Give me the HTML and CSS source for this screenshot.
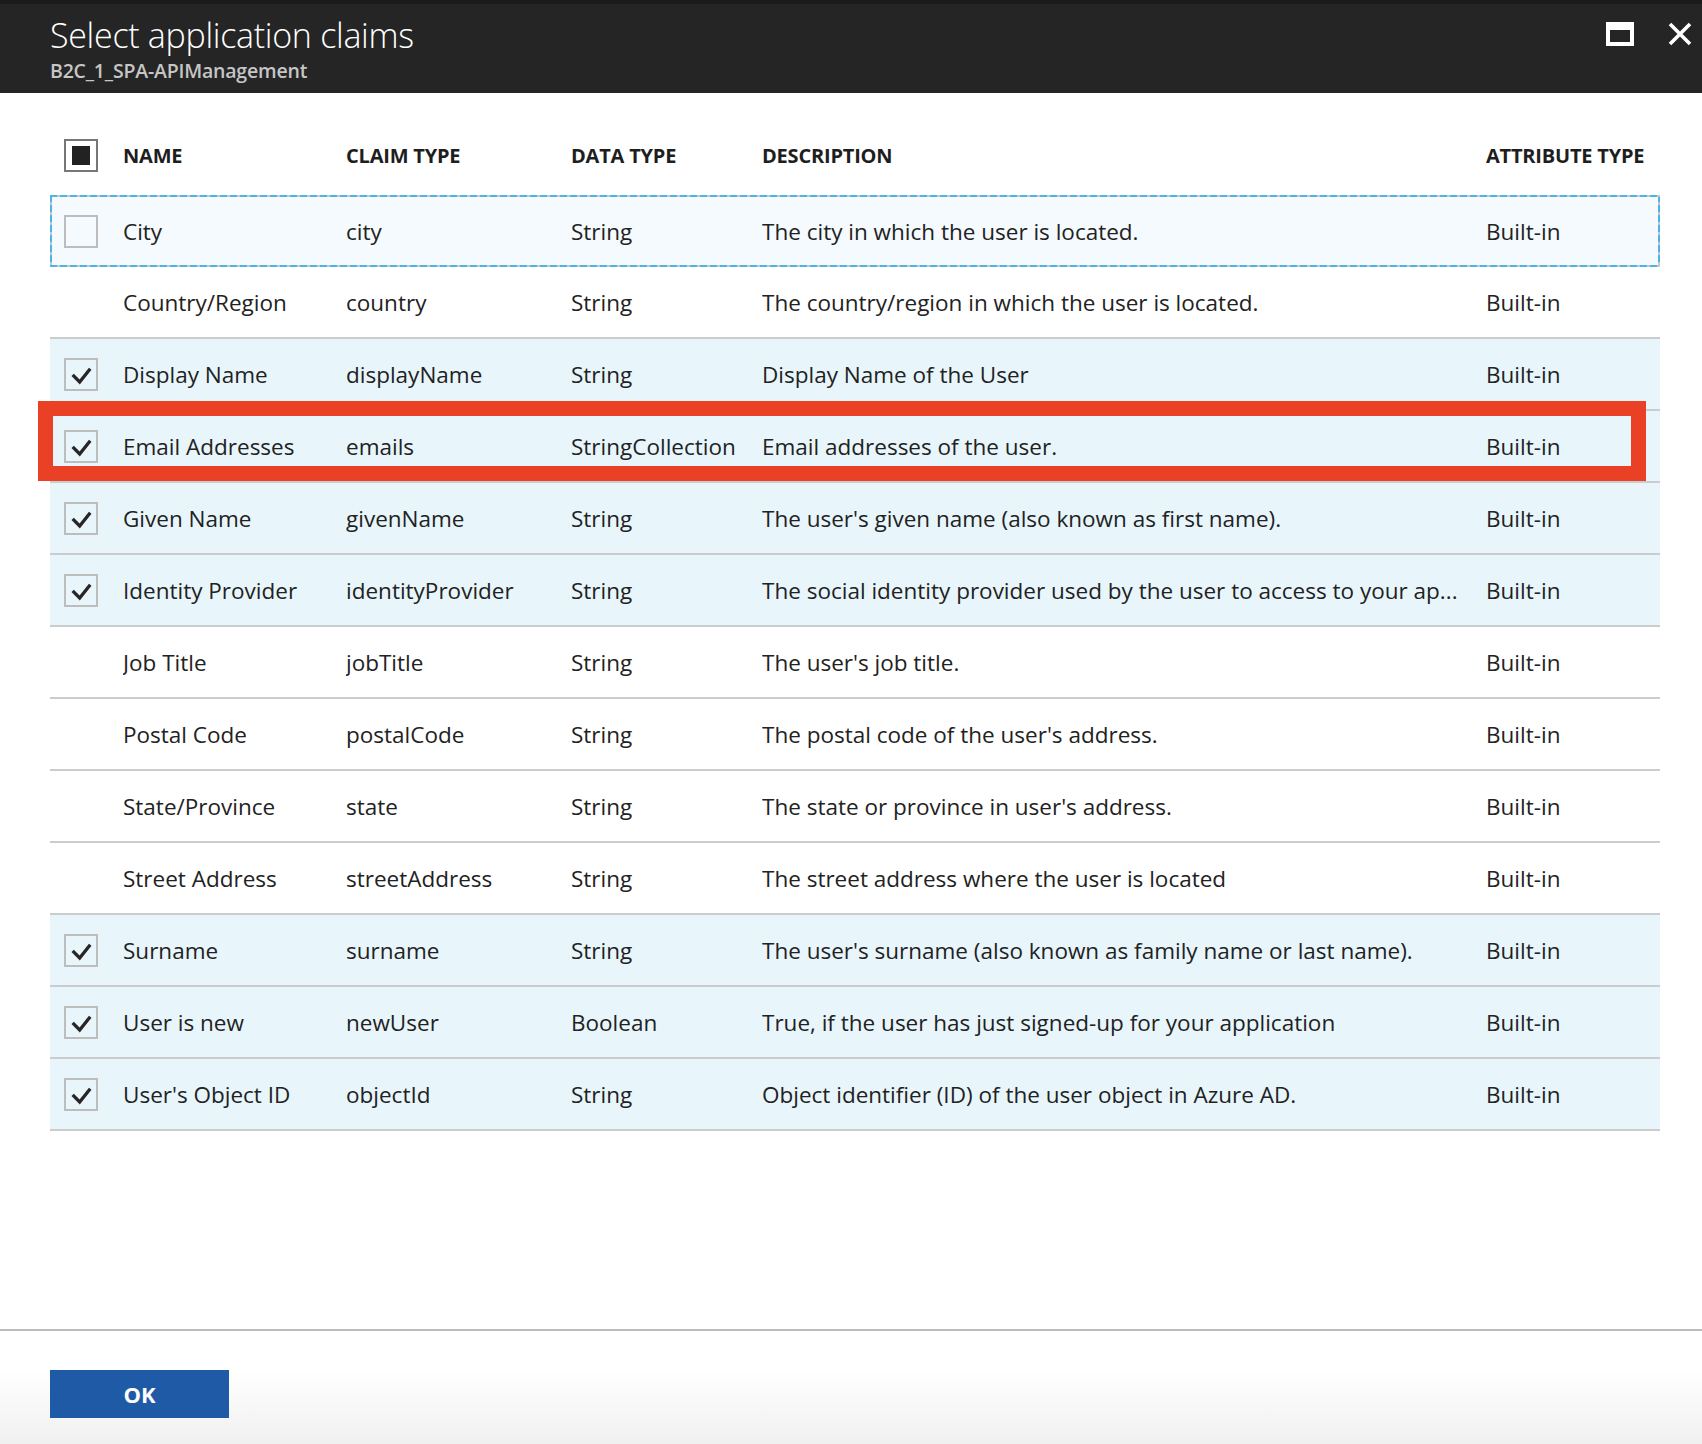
FILE: index.html
```html
<!DOCTYPE html>
<html lang="en">
<head>
<meta charset="utf-8">
<title>Select application claims</title>
<link rel="stylesheet" href="styles.css">
</head>
<body>
<div class="page">
  <header class="blade-header">
    <div class="titles">
      <div class="title">Select application claims</div>
      <div class="subtitle">B2C_1_SPA-APIManagement</div>
    </div>
    <div class="controls">
      <span class="ctl maximize"><svg width="28" height="24" viewBox="0 0 28 24"><path d="M0 0H28V24H0Z M4 8V20H24V8Z" fill="#fff" fill-rule="evenodd"/></svg></span>
      <span class="ctl close"><svg width="24" height="24" viewBox="0 0 24 24"><path d="M2 2L22 22M22 2L2 22" stroke="#fff" stroke-width="3.6" fill="none"/></svg></span>
    </div>
  </header>

  <main class="content">
    <div class="grid">
      <div class="row head">
        <div class="c chk"><span class="box all"><span class="fill"></span></span></div>
        <div class="c name">NAME</div>
        <div class="c claim">CLAIM TYPE</div>
        <div class="c dtype">DATA TYPE</div>
        <div class="c desc">DESCRIPTION</div>
        <div class="c attr">ATTRIBUTE TYPE</div>
      </div>

      <div class="row focus">
        <div class="c chk"><span class="box"></span></div>
        <div class="c name">City</div>
        <div class="c claim">city</div>
        <div class="c dtype">String</div>
        <div class="c desc">The city in which the user is located.</div>
        <div class="c attr">Built-in</div>
      </div>

      <div class="row">
        <div class="c chk"></div>
        <div class="c name">Country/Region</div>
        <div class="c claim">country</div>
        <div class="c dtype">String</div>
        <div class="c desc">The country/region in which the user is located.</div>
        <div class="c attr">Built-in</div>
      </div>

      <div class="row sel">
        <div class="c chk"><span class="box"><svg class="tick" viewBox="0 0 33 33"><polyline points="7,17 15,25 27,10"/></svg></span></div>
        <div class="c name">Display Name</div>
        <div class="c claim">displayName</div>
        <div class="c dtype">String</div>
        <div class="c desc">Display Name of the User</div>
        <div class="c attr">Built-in</div>
      </div>

      <div class="row sel marked">
        <div class="c chk"><span class="box"><svg class="tick" viewBox="0 0 33 33"><polyline points="7,17 15,25 27,10"/></svg></span></div>
        <div class="c name">Email Addresses</div>
        <div class="c claim">emails</div>
        <div class="c dtype">StringCollection</div>
        <div class="c desc">Email addresses of the user.</div>
        <div class="c attr">Built-in</div>
        <div class="highlight"></div>
      </div>

      <div class="row sel">
        <div class="c chk"><span class="box"><svg class="tick" viewBox="0 0 33 33"><polyline points="7,17 15,25 27,10"/></svg></span></div>
        <div class="c name">Given Name</div>
        <div class="c claim">givenName</div>
        <div class="c dtype">String</div>
        <div class="c desc">The user's given name (also known as first name).</div>
        <div class="c attr">Built-in</div>
      </div>

      <div class="row sel">
        <div class="c chk"><span class="box"><svg class="tick" viewBox="0 0 33 33"><polyline points="7,17 15,25 27,10"/></svg></span></div>
        <div class="c name">Identity Provider</div>
        <div class="c claim">identityProvider</div>
        <div class="c dtype">String</div>
        <div class="c desc">The social identity provider used by the user to access to your ap...</div>
        <div class="c attr">Built-in</div>
      </div>

      <div class="row">
        <div class="c chk"></div>
        <div class="c name">Job Title</div>
        <div class="c claim">jobTitle</div>
        <div class="c dtype">String</div>
        <div class="c desc">The user's job title.</div>
        <div class="c attr">Built-in</div>
      </div>

      <div class="row">
        <div class="c chk"></div>
        <div class="c name">Postal Code</div>
        <div class="c claim">postalCode</div>
        <div class="c dtype">String</div>
        <div class="c desc">The postal code of the user's address.</div>
        <div class="c attr">Built-in</div>
      </div>

      <div class="row">
        <div class="c chk"></div>
        <div class="c name">State/Province</div>
        <div class="c claim">state</div>
        <div class="c dtype">String</div>
        <div class="c desc">The state or province in user's address.</div>
        <div class="c attr">Built-in</div>
      </div>

      <div class="row">
        <div class="c chk"></div>
        <div class="c name">Street Address</div>
        <div class="c claim">streetAddress</div>
        <div class="c dtype">String</div>
        <div class="c desc">The street address where the user is located</div>
        <div class="c attr">Built-in</div>
      </div>

      <div class="row sel">
        <div class="c chk"><span class="box"><svg class="tick" viewBox="0 0 33 33"><polyline points="7,17 15,25 27,10"/></svg></span></div>
        <div class="c name">Surname</div>
        <div class="c claim">surname</div>
        <div class="c dtype">String</div>
        <div class="c desc">The user's surname (also known as family name or last name).</div>
        <div class="c attr">Built-in</div>
      </div>

      <div class="row sel">
        <div class="c chk"><span class="box"><svg class="tick" viewBox="0 0 33 33"><polyline points="7,17 15,25 27,10"/></svg></span></div>
        <div class="c name">User is new</div>
        <div class="c claim">newUser</div>
        <div class="c dtype">Boolean</div>
        <div class="c desc">True, if the user has just signed-up for your application</div>
        <div class="c attr">Built-in</div>
      </div>

      <div class="row sel">
        <div class="c chk"><span class="box"><svg class="tick" viewBox="0 0 33 33"><polyline points="7,17 15,25 27,10"/></svg></span></div>
        <div class="c name">User's Object ID</div>
        <div class="c claim">objectId</div>
        <div class="c dtype">String</div>
        <div class="c desc">Object identifier (ID) of the user object in Azure AD.</div>
        <div class="c attr">Built-in</div>
      </div>
    </div>
  </main>

  <footer class="footer">
    <button class="ok">OK</button>
  </footer>
</div>
</body>
</html>
```

FILE: styles.css
```css
* { box-sizing: border-box; }

html, body {
  margin: 0;
  padding: 0;
  background: #ffffff;
}

body {
  font-family: "Open Sans", "Noto Sans", "Liberation Sans", sans-serif;
  color: #222222;
}

.page {
  width: 1702px;
  height: 1444px;
  display: flex;
  flex-direction: column;
  overflow: hidden;
}

/* ---------- header ---------- */
.blade-header {
  height: 93px;
  flex: none;
  background: #252525;
  border-top: 4px solid #1b1b1b;
  display: flex;
  justify-content: space-between;
  align-items: flex-start;
  padding: 0 10px 0 50px;
}

.titles {
  padding-top: 10px;
}

.title {
  font-size: 34px;
  font-weight: 300;
  line-height: 42px;
  color: #ffffff;
  letter-spacing: -0.3px;
}

.subtitle {
  margin-top: 2px;
  font-size: 19.5px;
  font-weight: 600;
  line-height: 26px;
  color: #c6c6c6;
  letter-spacing: -0.2px;
}

.controls {
  display: flex;
  gap: 34px;
  padding-top: 18px;
}

.ctl {
  display: block;
  line-height: 0;
}

.ctl svg { display: block; }

/* ---------- table ---------- */
.content {
  flex: 1;
  padding: 0 42px 0 50px;
}

.grid {
  width: 1610px;
  display: flex;
  flex-direction: column;
}

.row {
  position: relative;
  display: flex;
  align-items: center;
  height: 72px;
  border-bottom: 2px solid #caccce;
  font-size: 22.5px;
  background: #ffffff;
}

.row.head {
  height: 102px;
  border-bottom: none;
  font-size: 20px;
  font-weight: 700;
  padding-top: 22px;
  letter-spacing: -0.2px;
  color: #1e1e1e;
}

.row.sel { background: #e8f6fc; }

.row.focus {
  border-bottom: none;
  background:
    repeating-linear-gradient(90deg, #4cb5e8 0 7px, #c6c6c6 7px 10px) top left / 100% 2px no-repeat,
    repeating-linear-gradient(90deg, #4cb5e8 0 7px, #c6c6c6 7px 10px) bottom left / 100% 2px no-repeat,
    repeating-linear-gradient(180deg, #4cb5e8 0 7px, #c6c6c6 7px 10px) top left / 2px 100% no-repeat,
    repeating-linear-gradient(180deg, #4cb5e8 0 7px, #c6c6c6 7px 10px) top right / 2px 100% no-repeat,
    #f4fafd;
}

.c {
  white-space: nowrap;
  overflow: hidden;
  text-overflow: ellipsis;
}

.chk {
  width: 73px;
  flex: none;
  padding-left: 14px;
  display: flex;
  align-items: center;
}

.name  { width: 223px; flex: none; }
.claim { width: 225px; flex: none; }
.dtype { width: 191px; flex: none; }
.desc  { width: 724px; flex: none; padding-right: 10px; }
.attr  { flex: 1; }

.box {
  width: 34px;
  height: 33px;
  border: 2px solid #bdbdbd;
  display: flex;
  align-items: center;
  justify-content: center;
}

.box.all { border-color: #777777; }

.box .fill {
  width: 18px;
  height: 19px;
  background: #222222;
}

.tick {
  width: 30px;
  height: 29px;
  display: block;
}

.tick polyline {
  fill: none;
  stroke: #262626;
  stroke-width: 3.8;
  stroke-linejoin: miter;
}

/* red annotation box over the Email Addresses row */
.highlight {
  position: absolute;
  left: -12px;
  top: -10px;
  width: 1608px;
  height: 80px;
  border: 15px solid #ea4026;
  pointer-events: none;
}

/* ---------- footer ---------- */
.footer {
  flex: none;
  height: 115px;
  border-top: 2px solid #bcbcbc;
  background: linear-gradient(180deg, #ffffff 0%, #ffffff 35%, #f0f0f0 100%);
  padding: 39px 0 0 50px;
}

.ok {
  width: 179px;
  height: 48px;
  border: none;
  background: #1f5aa6;
  color: #ffffff;
  font-family: "Open Sans", "Noto Sans", "Liberation Sans", sans-serif;
  font-size: 22px;
  font-weight: 700;
  padding: 0;
  margin: 0;
}
```
